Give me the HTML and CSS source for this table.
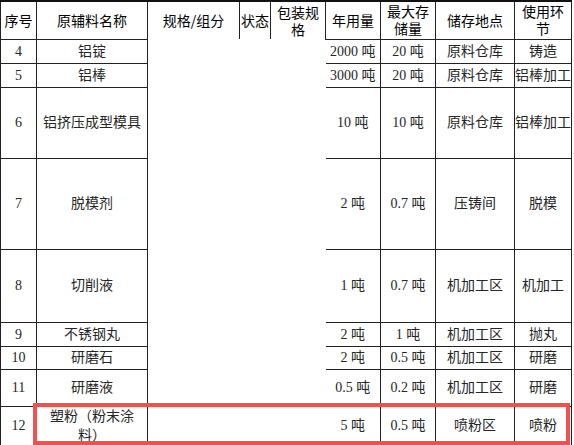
FILE: index.html
```html
<!DOCTYPE html>
<html lang="zh-CN">
<head>
<meta charset="utf-8">
<title>原辅料一览表</title>
<link rel="stylesheet" href="styles.css">
</head>
<body>
<div class="sheet">
  <table class="materials">
    <colgroup>
      <col class="c-no">
      <col class="c-name">
      <col class="c-spec">
      <col class="c-state">
      <col class="c-pack">
      <col class="c-year">
      <col class="c-max">
      <col class="c-place">
      <col class="c-use">
    </colgroup>
    <thead>
      <tr class="r-head">
        <th>序号</th>
        <th>原辅料名称</th>
        <th class="h-spec">规格/组分</th>
        <th class="h-state">状态</th>
        <th class="h-pack">包装规<br>格</th>
        <th class="h-year">年用量</th>
        <th>最大存<br>储量</th>
        <th>储存地点</th>
        <th>使用环<br>节</th>
      </tr>
    </thead>
    <tbody>
      <tr class="r-24">
        <td>4</td>
        <td>铝锭</td>
        <td class="merged" rowspan="9" colspan="3"></td>
        <td>2000 吨</td>
        <td>20 吨</td>
        <td>原料仓库</td>
        <td>铸造</td>
      </tr>
      <tr class="r-24">
        <td>5</td>
        <td>铝棒</td>
        <td>3000 吨</td>
        <td>20 吨</td>
        <td>原料仓库</td>
        <td>铝棒加工</td>
      </tr>
      <tr class="r-71">
        <td>6</td>
        <td>铝挤压成型模具</td>
        <td>10 吨</td>
        <td>10 吨</td>
        <td>原料仓库</td>
        <td>铝棒加工</td>
      </tr>
      <tr class="r-91">
        <td>7</td>
        <td>脱模剂</td>
        <td>2 吨</td>
        <td>0.7 吨</td>
        <td>压铸间</td>
        <td>脱模</td>
      </tr>
      <tr class="r-73">
        <td>8</td>
        <td>切削液</td>
        <td>1 吨</td>
        <td>0.7 吨</td>
        <td>机加工区</td>
        <td>机加工</td>
      </tr>
      <tr class="r-24">
        <td>9</td>
        <td>不锈钢丸</td>
        <td>2 吨</td>
        <td>1 吨</td>
        <td>机加工区</td>
        <td>抛丸</td>
      </tr>
      <tr class="r-23">
        <td>10</td>
        <td>研磨石</td>
        <td>2 吨</td>
        <td>0.5 吨</td>
        <td>机加工区</td>
        <td>研磨</td>
      </tr>
      <tr class="r-37">
        <td>11</td>
        <td>研磨液</td>
        <td>0.5 吨</td>
        <td>0.2 吨</td>
        <td>机加工区</td>
        <td>研磨</td>
      </tr>
      <tr class="r-36">
        <td>12</td>
        <td class="wrap">塑粉（粉末涂料）</td>
        <td>5 吨</td>
        <td>0.5 吨</td>
        <td>喷粉区</td>
        <td>喷粉</td>
      </tr>
    </tbody>
  </table>
  <div class="highlight"></div>
</div>
</body>
</html>
```
FILE: styles.css
```css
html, body {
  margin: 0;
  padding: 0;
  background: #ffffff;
}

.sheet {
  position: relative;
  width: 574px;
  height: 445px;
  overflow: hidden;
}

.materials {
  border-collapse: collapse;
  table-layout: fixed;
  width: 572px;
  font-family: "Liberation Serif", "Noto Sans CJK SC", serif;
  font-size: 14px;
  color: #262626;
}

.c-no { width: 36px; }
.c-name { width: 111px; }
.c-spec { width: 92px; }
.c-state { width: 31px; }
.c-pack { width: 55px; }
.c-year { width: 55px; }
.c-max { width: 55px; }
.c-place { width: 79px; }
.c-use { width: 57px; }

.materials th,
.materials td {
  border: 1px solid #222;
  padding: 0;
  text-align: center;
  vertical-align: middle;
  white-space: nowrap;
}

.materials th {
  font-family: "Noto Sans CJK SC", sans-serif;
  font-weight: 400;
  color: #000;
  line-height: 17px;
  border-top: 2px solid #111;
}

.materials td {
  line-height: 19px;
}

.materials td.wrap {
  white-space: normal;
  padding: 0 3px;
}

.materials .h-spec,
.materials .h-state,
.materials .h-pack {
  border-bottom: hidden;
}

.materials .merged {
  border-top: hidden;
  border-right: hidden;
}

.r-head { height: 38px; }
.r-24 { height: 24px; }
.r-23 { height: 23px; }
.r-71 { height: 71px; }
.r-91 { height: 91px; }
.r-73 { height: 73px; }
.r-37 { height: 37px; }
.r-36 { height: 36px; }

.highlight {
  position: absolute;
  left: 33px;
  top: 403px;
  width: 529px;
  height: 34px;
  border: 4px solid #f24f4f;
}
```
